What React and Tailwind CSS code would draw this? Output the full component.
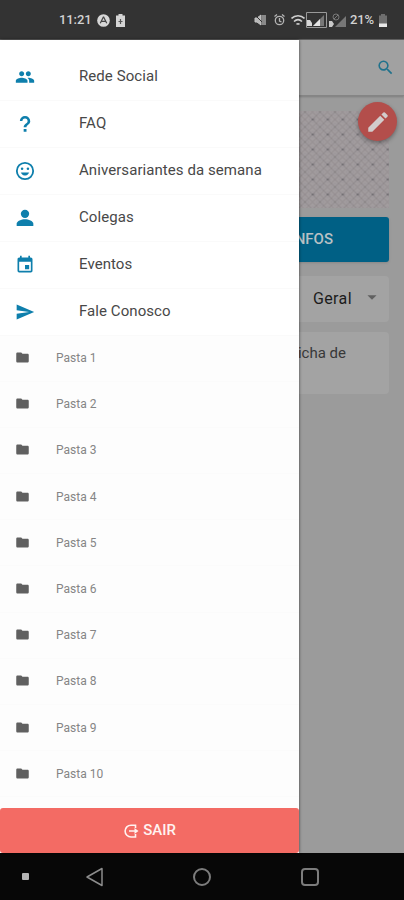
import {
  MdArrowDropDown,
  MdEdit,
  MdEvent,
  MdFolder,
  MdGroup,
  MdSearch,
  MdSend,
} from "react-icons/md";

function QuestionIcon({ className }) {
  return (
    <svg viewBox="0 0 24 24" className={className} fill="currentColor">
      <path d="M10.4 18h3.4v3.300h-3.400zM12 2.500a6.200 6.200 0 0 0-6.200 6h3.100a3.100 3.100 0 1 1 6.200.1c0 2.700-4.700 3-4.700 7.400h3.400c0-3 4.500-3.700 4.500-7.400A6.200 6.200 0 0 0 12 2.500z" />
    </svg>
  );
}

function SmileIcon({ className }) {
  return (
    <svg viewBox="0 0 24 24" className={className} fill="none" stroke="currentColor" strokeWidth="2.2">
      <circle cx="12" cy="12" r="9.8" />
      <path d="M7.500 14c1.700 4.200 7.300 4.200 9 0z" fill="currentColor" strokeWidth="0.5" />
      <circle cx="8.500" cy="9.300" r="1.500" fill="currentColor" stroke="none" />
      <circle cx="15.500" cy="9.300" r="1.500" fill="currentColor" stroke="none" />
    </svg>
  );
}

function PersonIcon({ className }) {
  return (
    <svg viewBox="0 0 24 24" className={className} fill="currentColor">
      <circle cx="12" cy="7" r="5" />
      <path d="M2 21.500V19c0-3.500 6-5.500 10-5.500s10 2 10 5.500v2.500z" />
    </svg>
  );
}

const MENU = [
  { label: "Rede Social", icon: MdGroup },
  { label: "FAQ", icon: QuestionIcon },
  { label: "Aniversariantes da semana", icon: SmileIcon },
  { label: "Colegas", icon: PersonIcon },
  { label: "Eventos", icon: MdEvent },
  { label: "Fale Conosco", icon: MdSend },
];

const FOLDERS = Array.from({ length: 10 }, (_, i) => `Pasta ${i + 1}`);

function StatusBar() {
  return (
    <div className="flex h-10 shrink-0 items-center border-b border-[#606060] bg-[#333333] pl-[59px] pr-[17px] pt-px text-[13px] font-medium text-[#d2d2d2]">
      <span className="w-8 tracking-[-0.1px]">11:21</span>
      <svg width="13" height="13" viewBox="0 0 14 14" className="ml-[6px]">
        <circle cx="7" cy="7" r="6.800" fill="#d6d6d6" />
        <path d="M7 3 3.500 10M7 3l3.500 7M5 8h4" fill="none" stroke="#444" strokeWidth="1.3" />
      </svg>
      <svg width="9" height="13" viewBox="0 0 9 13" className="ml-[6px]">
        <path d="M2.500 0h4v1.500H9V13H0V1.500h2.500z" fill="#d4d4d4" />
        <path d="M4.500 5v5M2.500 7.500h4" stroke="#555" strokeWidth="1.2" />
      </svg>

      <svg width="12" height="12" viewBox="0 0 12 12" className="ml-auto" fill="none" stroke="#c4c4c4">
        <path d="M1 4h2l4-3v10L3 8H1z" fill="#b8b8b8" />
        <path d="m1 1 10 10" stroke="#333" />
        <path d="M9 1v10M11 1v10" strokeWidth="1.2" />
      </svg>
      <svg width="11" height="12" viewBox="0 0 11 12" className="ml-2" fill="none" stroke="#b4b4b4" strokeWidth="1.300">
        <circle cx="5.500" cy="6.500" r="4.200" />
        <path d="M.5 2.500 3 .5M10.500 2.500 8 .5M5.500 4v3l2 1" />
      </svg>
      <svg width="14" height="13" viewBox="0 0 14 13" className="ml-[6px]" fill="none" stroke="#d0d0d0" strokeWidth="1.600">
        <path d="M.5 4.500C4 .8 10 .8 13.500 4.500M3 7.500c2.500-2.300 5.500-2.300 8 0M5.500 10.300c1-.8 2-.8 3 0" />
      </svg>
      <svg width="21" height="16" viewBox="0 0 21 16" className="ml-px">
        <path d="M.5.5h20v15H.5z" fill="none" stroke="#999" />
        <path d="M1 8h3l2 3v3H1z" fill="#d8d8d8" />
        <path d="M7 14 18 3v11z" fill="#777" />
        <path d="m7 14 7-7v7z" fill="#e4e4e4" />
      </svg>
      <svg width="19" height="15" viewBox="0 0 19 15" className="ml-px">
        <path d="M1 8h3l2 3-2 3H1z" fill="#c8c8c8" />
        <path d="M7 14 18 3v11z" fill="#777" />
        <circle cx="8" cy="4" r="3" fill="none" stroke="#777" />
        <path d="m6 6 4-4" stroke="#777" />
      </svg>
      <span className="ml-[3px] w-[26px] tracking-[-0.2px]">21%</span>
      <svg width="8" height="13" viewBox="0 0 8 13" className="ml-[3px]">
        <path d="M2 0h4v1.500h2V13H0V1.500h2z" fill="#6e6e6e" />
        <path d="M0 9.500h8V13H0z" fill="#e8e8e8" />
      </svg>
    </div>
  );
}

// Woven diamond texture of the cover image
function Cover() {
  return (
    <svg className="h-[97px] w-full" fill="none">
      <defs>
        <pattern id="weave" width="15" height="15" patternUnits="userSpaceOnUse" x="11.500" y="8.500">
          <path d="M0 0 15 15M15 0 0 15" stroke="#878284" strokeWidth=".9" />
          <path d="M7.500 0 15 7.500 7.500 15 0 7.500z" stroke="#8f878a" strokeWidth="1" />
          <path d="M7.500 3.500 11.500 7.500 7.500 11.500 3.500 7.500zM3.500 0 0 3.500M11.500 0 15 3.500M3.500 15 0 11.500M11.500 15 15 11.500" stroke="#948d90" strokeWidth=".7" />
          <path d="M0 0h1.500v1H0zM14 0h1v1h-1zM0 14h1.500v1H0zM14 14h1v1h-1z" fill="#747074" />
          <path d="M6.800 6.800h1.400v1.400H6.800z" fill="#7c777a" />
        </pattern>
      </defs>
      <rect width="100%" height="97" fill="#a29d9f" />
      <rect width="100%" height="97" fill="url(#weave)" />
    </svg>
  );
}

function Page() {
  return (
    <main className="flex h-full flex-col bg-[#9b9b9b]">
      <header className="flex h-14 shrink-0 items-center justify-end border-b border-[#858585] bg-[#a1a1a1] pr-[9px] shadow-[0_1px_2px_rgba(0,0,0,0.2)]">
        <MdSearch className="h-[19px] w-[19px] text-[#20728c]" />
      </header>
      <div className="flex flex-col pl-4 pr-[15px] pt-[15px]">
        <Cover />
        <div className="mt-[9px] flex h-[45px] items-center justify-end rounded-[3px] bg-[#006085] pr-[56px] text-[15px] font-medium text-[#b8c0c4] shadow-sm">
          INFOS
        </div>
        <div className="mt-[14px] flex h-[46px] items-center justify-end rounded-sm bg-[#a3a3a3] pr-[6px] text-base text-[#1c1c1c]">
          <span className="tracking-[0.4px]">Geral</span>
          <MdArrowDropDown className="-mt-1 ml-[9px] h-[22px] w-[22px] text-[#606060]" />
        </div>
        <div className="mt-[10px] h-[62px] rounded-sm bg-[#a3a3a3] pr-[43px] pt-[9px] text-right text-[15px] leading-6 text-[#383838]">
          Ficha de
        </div>
      </div>
      <button className="absolute right-[7px] top-[62px] grid h-[39px] w-[39px] place-items-center rounded-full bg-[#b34e4b] text-[#d2cccc] shadow-[0_2px_4px_rgba(0,0,0,0.35)]">
        <MdEdit className="h-[26px] w-[26px]" />
      </button>
    </main>
  );
}

function Drawer() {
  return (
    <aside className="absolute inset-y-0 left-0 flex w-[299px] flex-col bg-white pt-[13.500px] shadow-[0_0_3px_rgba(0,0,0,0.6)]">
      <nav className="flex flex-col">
        {MENU.map(({ label, icon: Icon }) => (
          <a key={label} className="flex h-[47px] items-center border-b border-[#fafafa] pl-[15px] text-[15px] text-[#484848]">
            <Icon className="h-5 w-5 text-[#0e7fac]" />
            <span className="ml-[44px] tracking-[0.07px]">{label}</span>
          </a>
        ))}
      </nav>
      <nav className="flex flex-1 flex-col bg-[#fdfdfd]">
        {FOLDERS.map((name) => (
          <a key={name} className="flex h-[46.2px] items-center border-b border-[#fbfbfb] pl-[15px] text-xs text-[#858585]">
            <MdFolder className="-mt-px h-[15px] w-[15px] text-[#606060]" />
            <span className="ml-[26px]">{name}</span>
          </a>
        ))}
      </nav>
      <button className="flex h-[45px] shrink-0 items-center justify-center gap-[3px] rounded-[3px] bg-[#f36b64] text-[15px] font-medium text-[#fff3f1]">
        <svg width="17" height="16" viewBox="0 0 17 16" fill="none" stroke="currentColor" strokeWidth="1.600">
          <path d="M12.500 5V2.200H8a5.900 5.900 0 0 0 0 11.800h4.500V11M6 8h7" />
          <path d="m11.500 5 4 3-4 3z" fill="currentColor" stroke="none" />
        </svg>
        SAIR
      </button>
    </aside>
  );
}

function NavigationBar() {
  return (
    <div className="flex h-[47px] shrink-0 items-center bg-[#070707] pl-[22px]">
      <span className="h-[7px] w-[7px] rounded-[1px] bg-[#b5b5b5]" />
      <svg width="20" height="22" viewBox="0 0 20 22" className="ml-[56px]" fill="none" stroke="#8c8c8c" strokeWidth="1.500" strokeLinejoin="round">
        <path d="M17 2.500v17L2 11z" />
      </svg>
      <span className="ml-[88px] h-[18px] w-[18px] rounded-full border-2 border-[#7c7c7c]" />
      <span className="ml-[90px] h-[18px] w-[18px] rounded-sm border-2 border-[#7c7c7c]" />
    </div>
  );
}

export default function App() {
  return (
    <div className="flex h-[900px] w-[404px] flex-col overflow-hidden font-[Roboto,sans-serif]">
      <StatusBar />
      <div className="relative min-h-0 flex-1">
        <Page />
        <Drawer />
      </div>
      <NavigationBar />
    </div>
  );
}
